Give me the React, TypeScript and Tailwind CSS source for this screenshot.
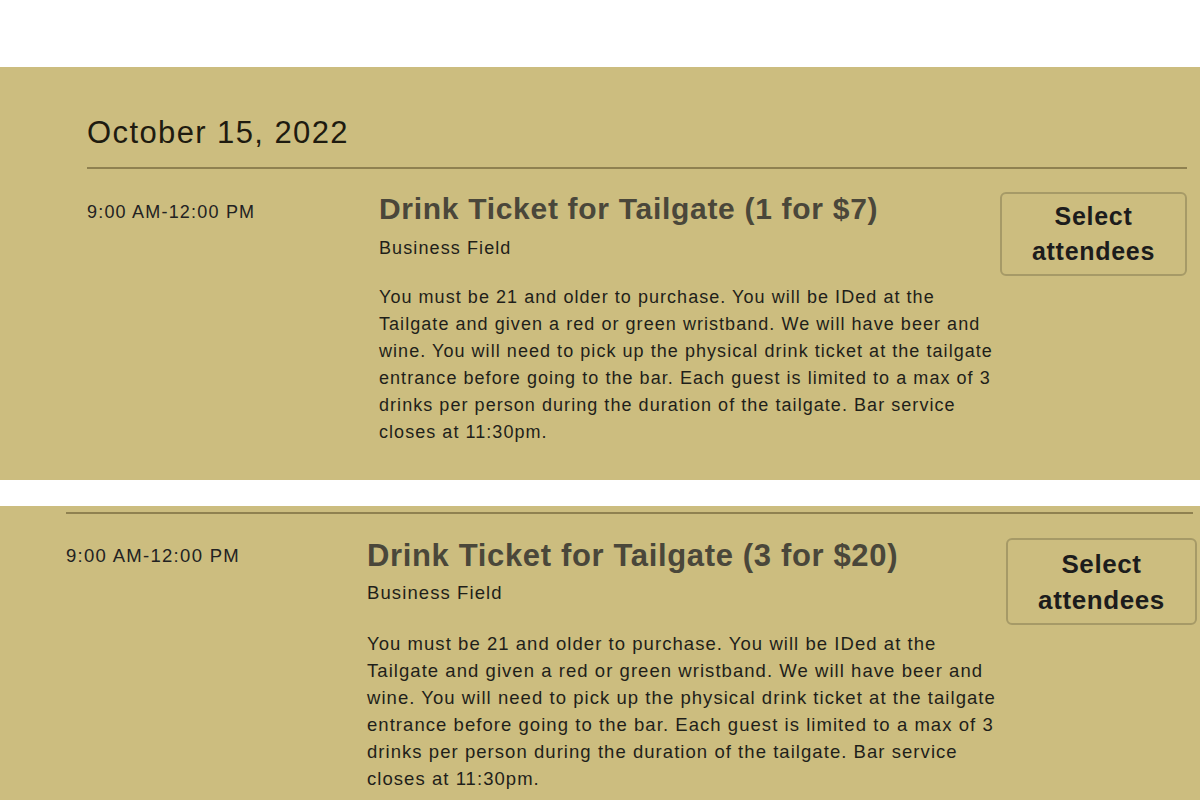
import React from "react";

const lines = [
  "You must be 21 and older to purchase. You will be IDed at the",
  "Tailgate and given a red or green wristband. We will have beer and",
  "wine. You will need to pick up the physical drink ticket at the tailgate",
  "entrance before going to the bar. Each guest is limited to a max of 3",
  "drinks per person during the duration of the tailgate. Bar service",
  "closes at 11:30pm.",
];

function TicketRow({ title, big }: { title: string; big?: boolean }) {
  return (
    <div className="flex items-start">
      <div
        className={
          big
            ? "w-[301px] pt-[4px] text-[18.5px] tracking-[1.3px] text-[#222]"
            : "w-[292px] pt-[7px] text-[18px] tracking-[1.2px] text-[#222]"
        }
      >
        9:00 AM-12:00 PM
      </div>
      <div className="flex-1">
        <h2
          className={
            big
              ? "text-[31px] tracking-[0.65px] font-bold text-[#4a473a] leading-[36px]"
              : "text-[30px] tracking-[0.7px] font-bold text-[#4a473a] leading-[34px]"
          }
        >
          {title}
        </h2>
        <div
          className={
            big
              ? "mt-[5px] text-[18.5px] tracking-[1.1px] text-[#1f1f1a]"
              : "mt-[9px] text-[18px] tracking-[1.1px] text-[#1f1f1a]"
          }
        >
          Business Field
        </div>
        <p
          className={
            big
              ? "mt-[23px] text-[18.5px] tracking-[1.05px] leading-[27px] text-[#1f1f1a]"
              : "mt-[22px] text-[18px] tracking-[1.05px] leading-[27px] text-[#1f1f1a]"
          }
        >
          {lines.map((l) => (
            <span key={l} className="block">{l}</span>
          ))}
        </p>
      </div>
      <button
        className={
          big
            ? "w-[191px] h-[87px] rounded-[6px] border-2 border-[#a69a67] text-[26px] tracking-[0.6px] font-bold leading-[36px] text-[#1c1c1c]"
            : "w-[187px] h-[84px] rounded-[6px] border-2 border-[#a69a67] text-[25px] tracking-[0.7px] font-bold leading-[35px] text-[#1c1c1c]"
        }
      >
        Select
        <br />
        attendees
      </button>
    </div>
  );
}

export default function App() {
  return (
    <div className="w-[1200px] h-[800px] overflow-hidden bg-white [font-family:'Liberation_Sans',Arial,sans-serif]">
      <div className="h-[67px]" />
      <section className="h-[413px] bg-[#ccbd7f] pl-[87px] pr-[13px] pt-[46px]">
        <h1 className="text-[31px] tracking-[1.4px] leading-[40px] text-[#1e1b10]">October 15, 2022</h1>
        <div className="mt-[14px] h-[2px] bg-[#8f8150]" />
        <div className="mt-[23px]">
          <TicketRow title="Drink Ticket for Tailgate (1 for $7)" />
        </div>
      </section>
      <div className="h-[26px]" />
      <section className="h-[294px] bg-[#ccbd7f] pl-[66px] pr-[3px] pt-[6px]">
        <div className="h-[2px] bg-[#8f8150] mr-[4px]" />
        <div className="mt-[24px]">
          <TicketRow title="Drink Ticket for Tailgate (3 for $20)" big />
        </div>
      </section>
    </div>
  );
}
